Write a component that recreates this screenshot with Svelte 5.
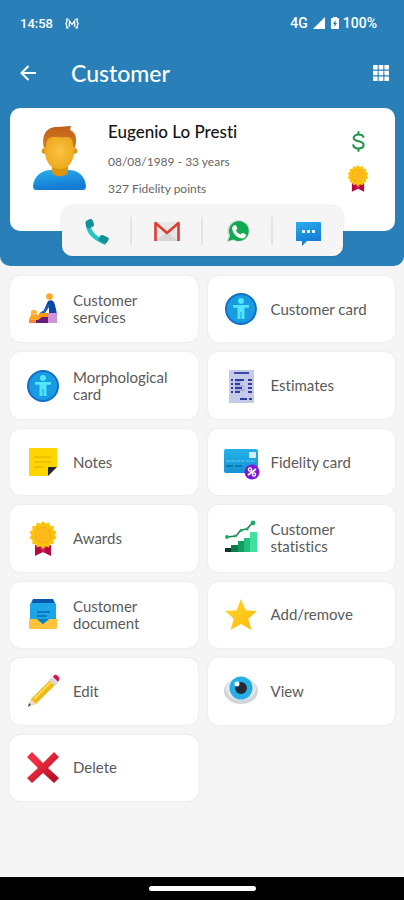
<script lang="ts">
    type Item = { icon: string; label: string };

    const customer = {
        name: 'Eugenio Lo Presti',
        birth: '08/08/1989 - 33 years',
        points: '327 Fidelity points',
    };

    const contacts: Item[] = [
        { icon: 'phone', label: 'Call' },
        { icon: 'mail', label: 'Send e-mail' },
        { icon: 'whatsapp', label: 'WhatsApp' },
        { icon: 'sms', label: 'Send message' },
    ];

    const items: Item[] = [
        { icon: 'services', label: 'Customer services' },
        { icon: 'body', label: 'Customer card' },
        { icon: 'body', label: 'Morphological card' },
        { icon: 'estimates', label: 'Estimates' },
        { icon: 'notes', label: 'Notes' },
        { icon: 'fidelity', label: 'Fidelity card' },
        { icon: 'award', label: 'Awards' },
        { icon: 'statistics', label: 'Customer statistics' },
        { icon: 'document', label: 'Customer document' },
        { icon: 'star', label: 'Add/remove' },
        { icon: 'edit', label: 'Edit' },
        { icon: 'view', label: 'View' },
        { icon: 'delete', label: 'Delete' },
    ];

    // 14-pointed badge outline
    const badge = Array.from({ length: 28 }, (_, i) => {
        const r = i % 2 ? 11.5 : 14;
        const a = (i * Math.PI) / 14 - Math.PI / 2;
        return `${(17 + r * Math.cos(a)).toFixed(1)},${(14 + r * Math.sin(a)).toFixed(1)}`;
    }).join(' ');
</script>

{#snippet icon(name: string)}
    <svg class="icon" viewBox="0 0 34 34" aria-hidden="true">
        {#if name === 'services'}
            <circle cx="23.5" cy="4.5" r="3.3" fill="#ffa726" />
            <path d="M22 9c4-2 6 0 7 4l2 9h-8v-7l-4 6-5 2-.5-2 4-2z" fill="#0d47a1" />
            <path d="M23 13l-5 7-3 1" stroke="#1565c0" stroke-width="2" fill="none" />
            <circle cx="8" cy="21" r="3.2" fill="#ffb74d" />
            <path d="M3 27l2-4h11l-1 6H3z" fill="#ffa726" />
            <path d="M13 21h11v5H13z" fill="#ff9800" />
            <path d="M3 28h9l4-3h8v6H3z" fill="#6a1b7a" />
            <path d="M3 28h7v3H3z" fill="#f28b30" />
            <path d="M22 21h9v10h-9z" fill="#ce93d8" />
        {:else if name === 'body'}
            <circle cx="17" cy="17" r="15" fill="#199be2" stroke="#0f70ca" stroke-width="2" />
            <circle cx="17" cy="9" r="3" fill="#50e6ff" />
            <path d="M9 13h16v2.800h-4.500V27h-3v-7h-1v7h-3V15.800H9z" fill="#50e6ff" />
        {:else if name === 'estimates'}
            <path d="M5 1h25v33H5z" fill="#c5cae9" />
            <path d="M10 4h15" stroke="#3949ab" stroke-width="2" />
            <path
                d="M7 11h2m2 0h9m4 0h4M7 15h2m2 0h5m8 0h4M7 19h2m2 0h7m6 0h4M7 23h2m2 0h5m8 0h4"
                stroke="#303f9f"
                stroke-width="2"
            />
            <path d="M11 13h6m-6 4h9m-9 4h10" stroke="#9095c9" />
            <path d="M16 30h7m2 0h3" stroke="#303f9f" stroke-width="2" />
        {:else if name === 'notes'}
            <path d="M4 3h26a1 1 0 0 1 1 1v18l-9 9H4a1 1 0 0 1-1-1V4a1 1 0 0 1 1-1z" fill="#fed500" />
            <path d="M8 12h17M8 17h17M8 22h10" stroke="#dcae00" />
            <path d="M31 22l-9 9v-8a1 1 0 0 1 1-1z" fill="#20293b" />
        {:else if name === 'fidelity'}
            <rect y="4" width="34" height="24" rx="2" fill="url(#card)" />
            <rect x="25" y="7" width="7" height="6" rx="1" fill="#d9eef3" />
            <path d="M2 16h30" stroke="#62cdf3" stroke-dasharray="4 1" />
            <path d="M2 21h7m2 0h7" stroke="#087aa9" stroke-width="2" />
            <circle cx="28" cy="27" r="7.500" fill="#8216d4" />
            <path d="M24 30l8-6" stroke="#fff" stroke-width="1.800" />
            <circle cx="26" cy="24.500" r="1.600" fill="none" stroke="#fff" stroke-width="1.400" />
            <circle cx="30" cy="29.500" r="1.600" fill="none" stroke="#fff" stroke-width="1.400" />
        {:else if name === 'award'}
            <path d="M9 24h16v11l-8-4-8 4z" fill="#b50943" />
            <path d="M13 25h8l-4 7z" fill="#d92159" />
            <polygon points={badge} fill="#fdc20b" />
            <circle cx="17" cy="14" r="8" fill="#ffb91a" stroke="#f3b012" />
        {:else if name === 'statistics'}
            <path d="M3 16l9-1 5-6 6-1 6-7" stroke="#39745c" stroke-width="1.600" fill="none" />
            <g fill="#12b366">
                <circle cx="3" cy="16" r="2" />
                <circle cx="11" cy="15" r="1.500" />
                <circle cx="17" cy="9.500" r="1.500" />
                <circle cx="23" cy="8" r="1.500" />
                <circle cx="29" cy="2" r="2.400" />
            </g>
            <path d="M1 27h6v4H1z" fill="#073b27" />
            <path d="M7 24h7v7H7z" fill="#087b49" />
            <path d="M14 20h6v11h-6z" fill="#119c60" />
            <path d="M20 17h6v14h-6z" fill="#21c17d" />
            <path d="M26 11h7v20h-7z" fill="#43df9c" />
        {:else if name === 'document'}
            <path d="M7 1h20l3 6v17H4V7z" fill="#075aaa" />
            <path d="M5 5h24l1 2v19H4V7z" fill="#1ca6e8" />
            <path d="M11 14h13m-13 4h10" stroke="#076fb3" stroke-width="1.500" />
            <path d="M3 21h8l6 5 6-5h8v9a1 1 0 0 1-1 1H4a1 1 0 0 1-1-1z" fill="#fcc43a" />
            <path d="M11 21h12l-6 5z" fill="#087ec8" />
        {:else if name === 'star'}
            <path d="M17 1l4.600 11.200L33 13l-8.800 7.800L27.500 32 17 26 6.500 32l3.300-11.200L1 13l11.400-.800z" fill="url(#gold)" />
        {:else if name === 'edit'}
            <path d="M5 25L25 5l5 5-20 20-8 2z" fill="#edbb16" />
            <path d="M8 25L27 6" stroke="#ffda55" stroke-width="2" />
            <path d="M5 25l5 5-8 2z" fill="#efdbc4" />
            <path d="M3 29l2 2-3 2z" fill="#424a55" />
            <path d="M23 6l3-3 6 6-3 3z" fill="#d6d8dc" />
            <path d="M27 3l1-2q2-1 4 1t1 4l-1 2z" fill="#d01c4b" />
        {:else if name === 'view'}
            <ellipse cx="17" cy="17" rx="17" ry="13" fill="#d2d5da" />
            <ellipse cx="17" cy="15" rx="15" ry="11" fill="#e5e7eb" />
            <circle cx="17" cy="14" r="11.500" fill="#25afe8" />
            <circle cx="17" cy="14" r="6" fill="#222b35" />
            <circle cx="13" cy="10" r="2.500" fill="#f5fbff" />
        {:else if name === 'delete'}
            <path d="M6 1l11 11L28 1l5 5-11 11 11 10-5 5-11-10L6 32l-5-5 11-10L1 6z" fill="url(#red)" />
        {:else if name === 'phone'}
            <path d="M8 9q0 7 5 12t13 8" stroke="#24c4c6" stroke-width="4.500" fill="none" />
            <path d="M5.500 8q0-1 1.500-1.500l3-1.500q1.500-.500 2.500 1l1.500 4q.500 1.500-1 2.500l-3 1.500q-3 1-4-2z" fill="#129199" />
            <path d="M18 26l2-4q1-1.500 3-1l5 2.500q1.500 1 .500 2.500l-1.500 2.500q-1.500 1.500-4 .5z" fill="#129199" />
        {:else if name === 'mail'}
            <path d="M5 8h24v19H5z" fill="#e7e7e7" />
            <path d="M17 18l11 9H6z" fill="#d6d6d6" />
            <path d="M5.500 27V9L17 19 28.500 9v18" fill="none" stroke="#dc3d32" stroke-width="2.600" stroke-linejoin="round" />
        {:else if name === 'whatsapp'}
            <path d="M17 6a11 11 0 1 1-5 20.500L5 29l2.500-7A11 11 0 0 1 17 6z" fill="#d9dddb" />
            <path d="M17.500 7a10 10 0 1 1-5 18.500L7 27l2-5.500A10 10 0 0 1 17.500 7z" fill="#12aa51" />
            <path
                d="M12 12l2-1 1 .500 1.300 3-1.300 2q1.500 3 4.500 4l1.500-1.500h1l3 1.500v1q-1 3-4 3-7-1-9.500-8-1-3 .500-4.500z"
                fill="#fff"
            />
        {:else if name === 'sms'}
            <path d="M5 8h24a1 1 0 0 1 1 1v18H16l-5 5v-5H5z" fill="url(#blue)" />
            <path d="M11 16h3v3h-3zm5 0h3v3h-3zm5 0h3v3h-3z" fill="#e5f5ff" />
        {/if}
    </svg>
{/snippet}

<svg class="defs" aria-hidden="true">
    <defs>
        <linearGradient id="blue" x1="0" y1="0" x2="0.3" y2="1">
            <stop offset="0" stop-color="#28aeed" />
            <stop offset="1" stop-color="#1479d3" />
        </linearGradient>
        <linearGradient id="card" x1="0" y1="0" x2="0" y2="1">
            <stop offset="0" stop-color="#25b2e8" />
            <stop offset="1" stop-color="#1592d5" />
        </linearGradient>
        <linearGradient id="gold" x1="0" y1="0" x2="1" y2="1">
            <stop offset="0" stop-color="#ffd72b" />
            <stop offset="1" stop-color="#fdb90b" />
        </linearGradient>
        <linearGradient id="red" x1="0" y1="0" x2="1" y2="1">
            <stop offset="0.3" stop-color="#f22f40" />
            <stop offset="0.8" stop-color="#bd102b" />
        </linearGradient>
        <linearGradient id="hair" x1="0" y1="0" x2="0" y2="1">
            <stop offset="0" stop-color="#bf5f17" />
            <stop offset="1" stop-color="#d97d27" />
        </linearGradient>
        <radialGradient id="face">
            <stop offset="0" stop-color="#fbc344" />
            <stop offset="1" stop-color="#eda91d" />
        </radialGradient>
    </defs>
</svg>

<div class="screen">
    <header>
        <div class="status">
            <span>14:58</span>
            <svg class="cast" viewBox="0 0 16 12" fill="none" stroke="currentColor" stroke-width="1.500">
                <path d="M4 1H2v3L1 6l1 2v3h2M12 1h2v3l1 2-1 2v3h-2M5 10V3l3 4 3-4v7" />
            </svg>
            <span class="network">4G</span>
            <svg class="signal" viewBox="0 0 12 12"><path d="M12 0v12H0z" fill="currentColor" /></svg>
            <svg class="battery" viewBox="0 0 8 12">
                <path d="M2 0h4v1h1q1 0 1 1v9q0 1-1 1H1q-1 0-1-1V2q0-1 1-1h1z" fill="currentColor" />
                <path d="M4.500 3L2 7h1.500v3L6 6H4.500z" fill="#2980b9" />
            </svg>
            <span class="level">100%</span>
        </div>

        <div class="toolbar">
            <button class="tool" aria-label="Back">
                <svg viewBox="0 0 16 16" fill="none" stroke="currentColor" stroke-width="2">
                    <path d="M16 8H2M8.500 1L1.500 8l7 7" />
                </svg>
            </button>
            <h1>Customer</h1>
            <button class="tool" aria-label="Menu">
                <svg viewBox="0 0 16 16" fill="currentColor">
                    {#each [0, 5.7, 11.4] as y}
                        {#each [0, 5.7, 11.4] as x}
                            <rect {x} {y} width="4.600" height="4.600" rx="0.5" />
                        {/each}
                    {/each}
                </svg>
            </button>
        </div>

        <section class="profile">
            <svg class="avatar" viewBox="0 0 54 64" aria-hidden="true">
                <path d="M3 64q-3 0-3-4c1-10 9-16 18-16h18c9 0 16 6 17 16q0 4-3 4z" fill="url(#blue)" />
                <path d="M19 36h16v9c0 7-16 7-16 0z" fill="#d9950f" />
                <circle cx="11.500" cy="25" r="2.800" fill="#d9950f" />
                <circle cx="41.500" cy="25" r="2.800" fill="#d9950f" />
                <path d="M11 16C12 6 41 6 42 16c0 16-4 27-15.500 27S11 32 11 16z" fill="url(#face)" />
                <path d="M11 22C8 8 14 1 24 1l14-1-1 4c7 3 7 10 5 18l-2-1c0-7-2-10-6-10-6 1-9 0-14 0-5 0-7 4-7 10z" fill="url(#hair)" />
            </svg>
            <div class="details">
                <h2>{customer.name}</h2>
                <p>{customer.birth}</p>
                <p>{customer.points}</p>
            </div>
            <div class="marks">
                <svg class="dollar" viewBox="0 0 14 22" fill="none" stroke="#1e9447" stroke-width="2.200">
                    <path d="M12.500 7C12 4 10 3.500 7 3.500S1.800 5 1.800 7.200C1.800 12 12.500 9.500 12.500 14.500c0 2.500-2 4-5.500 4s-5.500-1.500-5.800-4.500M7 0v4M7 18v4" />
                </svg>
                {@render icon('award')}
            </div>
        </section>

        <nav class="contacts" aria-label="Contact">
            {#each contacts as contact}
                <button aria-label={contact.label}>{@render icon(contact.icon)}</button>
            {/each}
        </nav>
    </header>

    <main>
        {#each items as item}
            <button class="item">
                {@render icon(item.icon)}
                <span>{item.label}</span>
            </button>
        {/each}
    </main>

    <footer><div class="handle"></div></footer>
</div>

<style>
    :global(body) {
        margin: 0;
        background-color: #f5f5f5;
    }

    .screen {
        display: flex;
        flex-direction: column;
        min-height: 100vh;
        font-family: Lato, sans-serif;
        font-variant-ligatures: none;
        color: #5a5a5a;
    }

    .defs {
        position: absolute;
        width: 0;
        height: 0;
    }

    button {
        margin: 0;
        padding: 0;
        border: none;
        background: none;
        color: inherit;
        font: inherit;
        cursor: pointer;
    }

    h1,
    h2,
    p {
        margin: 0;
    }

    svg {
        display: block;
        flex: none;
        overflow: visible;
    }

    header {
        padding: 0 9px 10px 10px;
        border-radius: 0 0 10px 10px;
        background-color: #2980b9;
        color: #fff;
    }

    .status {
        display: flex;
        align-items: center;
        height: 46px;
        padding: 0 18px 0 10px;
        font-family: Roboto, sans-serif;
        font-size: 13px;
        font-weight: 500;
    }

    .cast {
        width: 14px;
        height: 11px;
        margin-left: 12px;
    }

    .network,
    .level {
        font-size: 14px;
    }

    .network {
        margin-left: auto;
    }

    .signal {
        width: 12px;
        height: 12px;
        margin-left: 5px;
    }

    .battery {
        width: 8px;
        height: 12px;
        margin: 0 4px 0 6px;
    }

    .toolbar {
        display: flex;
        align-items: center;
        height: 54px;
        padding: 0 6px 8px 10px;
    }

    .tool svg {
        width: 16px;
        height: 16px;
    }

    h1 {
        flex: 1;
        padding-left: 35px;
        font-size: 23px;
        font-weight: 500;
        line-height: 28px;
    }

    .profile {
        display: flex;
        align-items: flex-start;
        height: 123px;
        box-sizing: border-box;
        padding: 14px 24px 0 23px;
        border-radius: 10px;
        background-color: #fff;
        color: #666;
    }

    .avatar {
        width: 54px;
        height: 64px;
        margin-top: 4px;
    }

    .details {
        flex: 1;
        padding-left: 21px;
    }

    h2 {
        margin-bottom: 7px;
        color: #151515;
        font-size: 17px;
        font-weight: 500;
        line-height: 19px;
    }

    .details p {
        font-size: 12px;
        line-height: 27px;
    }

    .marks {
        display: flex;
        flex-direction: column;
        align-items: center;
        gap: 13px;
        padding-top: 9px;
    }

    .dollar {
        width: 13px;
        height: 21px;
    }

    .marks .icon {
        width: 26px;
        height: 26px;
    }

    .contacts {
        position: relative;
        display: flex;
        margin: -25px 52px 0;
        border-radius: 10px;
        background-color: #f5f5f5;
        box-shadow: 0 0 3px rgba(0, 0, 0, 0.15);
    }

    .contacts button {
        display: flex;
        flex: 1;
        align-items: center;
        justify-content: center;
        height: 50px;
        background: linear-gradient(#e4e4e4, #e4e4e4) no-repeat right / 2px 28px;
    }

    .contacts button:last-child {
        background: none;
    }

    .contacts .icon {
        width: 34px;
        height: 34px;
    }

    main {
        display: grid;
        flex: 1;
        grid-template-columns: 1fr 1fr;
        grid-auto-rows: 1fr;
        gap: 10px;
        padding: 10px 9px 76px 10px;
    }

    .item {
        display: flex;
        align-items: center;
        gap: 13px;
        min-height: 60px;
        padding: 0 24px 0 16px;
        border-radius: 10px;
        background-color: #fff;
        box-shadow: 0 0 2px rgba(0, 0, 0, 0.1);
        font-size: 15px;
        line-height: 17px;
        text-align: left;
    }

    .item .icon {
        width: 34px;
        height: 34px;
    }

    footer {
        display: flex;
        align-items: center;
        justify-content: center;
        height: 23px;
        background-color: #000;
    }

    .handle {
        width: 107px;
        height: 5px;
        border-radius: 3px;
        background-color: #fff;
    }
</style>
